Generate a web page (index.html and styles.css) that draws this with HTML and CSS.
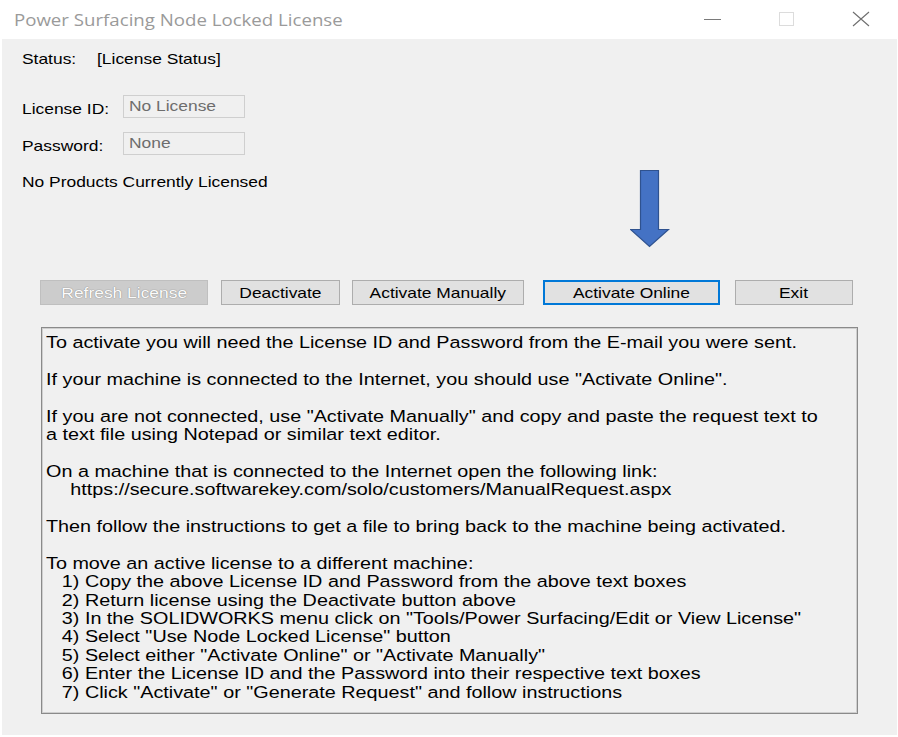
FILE: index.html
```html
<!DOCTYPE html>
<html>
<head>
<meta charset="utf-8">
<link rel="stylesheet" href="styles.css">
</head>
<body>
<div class="window">
  <div class="titlebar">
    <span class="title">Power Surfacing Node Locked License</span>
    <div class="controls">
      <svg class="ctl ctl-min" width="18" height="16" viewBox="0 0 18 16"><line x1="0" y1="8.5" x2="17" y2="8.5" stroke="#7a7a7a" stroke-width="1"/></svg>
      <svg class="ctl ctl-max" width="18" height="16" viewBox="0 0 18 16"><rect x="1.5" y="1.5" width="14" height="13" fill="none" stroke="#dcdcdc" stroke-width="1"/></svg>
      <svg class="ctl ctl-close" width="18" height="16" viewBox="0 0 18 16"><path d="M1 1 L17 15 M17 1 L1 15" stroke="#6e6e6e" stroke-width="1.1" fill="none"/></svg>
    </div>
  </div>
  <div class="body">
    <div class="status-row"><span class="lbl-status wide">Status:</span><span class="wide">[License Status]</span></div>
    <div class="field-row first"><span class="lbl"><span class="wide">License ID:</span></span><div class="input"><span class="wide">No License</span></div></div>
    <div class="field-row second"><span class="lbl"><span class="wide">Password:</span></span><div class="input"><span class="wide">None</span></div></div>
    <div class="products"><span class="wide">No Products Currently Licensed</span></div>
    <svg class="arrow" width="40" height="78" viewBox="0 0 40 78">
      <path d="M10.5 0.5 H28.5 V59.5 H38.5 L19.5 76.5 L0.5 59.5 H10.5 Z" fill="#4472c4" stroke="#2f528f" stroke-width="1.2"/>
    </svg>
    <div class="buttons">
      <div class="btn btn-refresh disabled"><span class="wide-c">Refresh License</span></div>
      <div class="btn btn-deact"><span class="wide-c">Deactivate</span></div>
      <div class="btn btn-manual"><span class="wide-c">Activate Manually</span></div>
      <div class="btn btn-online default"><span class="wide-c">Activate Online</span></div>
      <div class="btn btn-exit"><span class="wide-c">Exit</span></div>
    </div>
    <div class="textbox">
      <div class="tb-inner">
<p>To activate you will need the License ID and Password from the E-mail you were sent.</p>
<p class="gap">If your machine is connected to the Internet, you should use "Activate Online".</p>
<p class="gap">If you are not connected, use "Activate Manually" and copy and paste the request text to</p>
<p>a text file using Notepad or similar text editor.</p>
<p class="gap">On a machine that is connected to the Internet open the following link:</p>
<p class="url">https://secure.softwarekey.com/solo/customers/ManualRequest.aspx</p>
<p class="gap">Then follow the instructions to get a file to bring back to the machine being activated.</p>
<p class="gap">To move an active license to a different machine:</p>
<p class="item">1) Copy the above License ID and Password from the above text boxes</p>
<p class="item">2) Return license using the Deactivate button above</p>
<p class="item">3) In the SOLIDWORKS menu click on "Tools/Power Surfacing/Edit or View License"</p>
<p class="item">4) Select "Use Node Locked License" button</p>
<p class="item">5) Select either "Activate Online" or "Activate Manually"</p>
<p class="item">6) Enter the License ID and the Password into their respective text boxes</p>
<p class="item">7) Click "Activate" or "Generate Request" and follow instructions</p>
      </div>
    </div>
  </div>
</div>
</body>
</html>
```

FILE: styles.css
```css
html, body {
  margin: 0;
  padding: 0;
  background: #ffffff;
}

.window {
  width: 898px;
  height: 737px;
  background: #ffffff;
  display: flex;
  flex-direction: column;
  font-family: "Liberation Sans", Arial, sans-serif;
  color: #000;
}

.titlebar {
  height: 39px;
  display: flex;
  align-items: center;
  justify-content: space-between;
  flex-shrink: 0;
}

.title {
  display: inline-block;
  font-family: "Open Sans", "Noto Sans", sans-serif;
  font-size: 16px;
  color: #9a9a9a;
  margin-left: 14px;
  margin-top: 1px;
  transform: scaleX(1.165);
  transform-origin: left center;
}

.controls {
  display: flex;
  align-items: center;
  margin-right: 28px;
  margin-top: -1px;
}

.ctl { display: block; }
.ctl-min { margin-right: 56px; }
.ctl-max { margin-right: 56px; }

.wide {
  display: inline-block;
  transform: scaleX(1.16);
  transform-origin: left center;
  white-space: nowrap;
}

.wide-c {
  display: inline-block;
  transform: scaleX(1.16);
  transform-origin: center center;
  white-space: nowrap;
}

.body {
  position: relative;
  margin-left: 2px;
  margin-right: 1px;
  height: 696px;
  background: #f0f0f0;
  padding-left: 20px;
  font-size: 15px;
}

.status-row {
  padding-top: 11px;
  line-height: 18px;
  display: flex;
}
.lbl-status { width: 75px; }

.field-row {
  display: flex;
  align-items: center;
  height: 23px;
}
.field-row.first { margin-top: 27px; }
.field-row.second { margin-top: 14px; }

.lbl {
  width: 101px;
  padding-top: 4px;
}

.input {
  width: 115px;
  height: 21px;
  border: 1px solid #cfcfcf;
  background: #f0f0f0;
  color: #6d6d6d;
  line-height: 19px;
  padding-left: 5px;
  box-sizing: content-box;
}

.products {
  margin-top: 18px;
  line-height: 18px;
}

.arrow {
  position: absolute;
  left: 628px;
  top: 131px;
}

.buttons {
  display: flex;
  margin-top: 89px;
  margin-left: 18px;
}

.btn {
  height: 23px;
  line-height: 23px;
  border: 1px solid #adadad;
  background: #e1e1e1;
  text-align: center;
  font-size: 15px;
  box-sizing: content-box;
}
.btn-refresh { width: 166px; }
.btn-deact { width: 117px; margin-left: 13px; }
.btn-manual { width: 170px; margin-left: 12px; }
.btn-online { width: 173px; margin-left: 19px; }
.btn-exit { width: 116px; margin-left: 15px; }

.btn.disabled {
  background: #cccccc;
  border-color: #bfbfbf;
  color: #fbfbfb;
  text-shadow: 0 0 1px #8a8a8a, 0 0 1px #9a9a9a;
}

.btn.default {
  border: 2px solid #0078d7;
  height: 21px;
  line-height: 21px;
}

.textbox {
  margin-top: 22px;
  margin-left: 19px;
  width: 817px;
  height: 387px;
  border: 1px solid #8a8a8a;
  box-shadow: inset 0 0 0 1px #cfcfcf;
  padding: 5px 0 0 4px;
  box-sizing: border-box;
  overflow: hidden;
  font-family: "Liberation Sans", Arial, sans-serif;
  font-size: 16.3px;
  line-height: 18.4px;
  color: #000;
}

.tb-inner {
  transform: scaleX(1.215);
  transform-origin: 0 0;
}

.textbox p {
  margin: 0;
  white-space: nowrap;
}
.textbox p.gap { margin-top: 18.4px; }
.textbox p.url { padding-left: 20px; }
.textbox p.item { padding-left: 13px; }
```
